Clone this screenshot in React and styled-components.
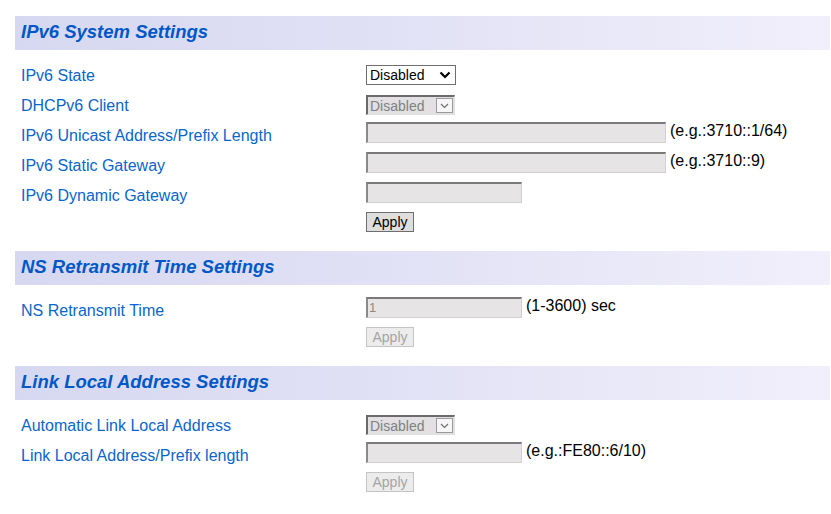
import React from 'react';
import styled, { createGlobalStyle, css } from 'styled-components';

const GlobalStyle = createGlobalStyle`
  html, body {
    margin: 0;
    padding: 0;
    background: #ffffff;
  }
  body {
    font-family: "Liberation Sans", Arial, sans-serif;
  }
`;

const Page = styled.div`
  padding: 16px 1px 0 15px;
`;

const Section = styled.section`
  margin-bottom: 11px;
`;

const SectionHeader = styled.h2`
  display: flex;
  align-items: center;
  height: 34px;
  margin: 0 0 10px 0;
  padding: 0 0 3px 6px;
  box-sizing: border-box;
  background: linear-gradient(90deg, #d6d8f1 0%, #e1e1f5 45%, #f1effb 100%);
  color: #0058c8;
  font-size: 18.5px;
  font-weight: bold;
  font-style: italic;
`;

const Row = styled.div`
  display: grid;
  grid-template-columns: 345px auto;
  height: 30px;
  padding-left: 6px;
`;

const Label = styled.div`
  align-self: center;
  padding-top: 2px;
  color: #0a66cc;
  font-size: 16px;
`;

const Control = styled.div`
  display: flex;
  align-items: center;
  ${props => props.centered ? css`
    align-self: center;
  ` : css`
    align-self: start;
    margin-top: 2px;
    height: 21px;
  `}
`;

const TextInput = styled.div`
  width: ${props => props.wide ? '300px' : '156px'};
  height: 21px;
  box-sizing: border-box;
  border-style: solid;
  border-width: 2px 1px 1px 2px;
  border-color: #7a7a7a #d0d0d0 #d0d0d0 #8a8a8a;
  background: #e7e4e6;
  color: #8a8a8a;
  font-size: 13px;
  line-height: 17px;
  padding-left: 1px;
`;

const Hint = styled.span`
  margin-left: 4px;
  color: #000000;
  font-size: 16px;
  margin-top: -3px;
`;

const SelectBox = styled.div`
  display: flex;
  align-items: center;
  justify-content: space-between;
  height: 20px;
  box-sizing: border-box;
  font-size: 14px;
  ${props => props.disabled ? css`
    width: 89px;
    border-style: solid;
    border-width: 2px 1px 1px 2px;
    border-color: #6a6a6a #e0e0e0 #e0e0e0 #6a6a6a;
    background: #e2e0e2;
    color: #808080;
    padding: 0 1px 0 2px;
  ` : css`
    width: 90px;
    border: 1px solid #6e6e6e;
    background: #ffffff;
    color: #000000;
    padding: 0 3px 0 3px;
  `}
`;

const ArrowButton = styled.span`
  display: flex;
  align-items: center;
  justify-content: center;
  ${props => props.disabled ? css`
    width: 17px;
    height: 15px;
    box-sizing: border-box;
    border: 1px solid #9a9a9a;
    background: #f6f6f6;
  ` : css`
    width: 14px;
    height: 14px;
  `}
`;

const Button = styled.button`
  align-self: flex-start;
  width: 48px;
  height: 20px;
  padding: 0;
  box-sizing: border-box;
  font-family: "Liberation Sans", Arial, sans-serif;
  font-size: 14px;
  border: 1px solid ${props => props.disabled ? '#c4c4c4' : '#6e6e6e'};
  background: ${props => props.disabled ? '#ececec' : '#dedede'};
  color: ${props => props.disabled ? '#a4a4a4' : '#000000'};
`;

const Chevron = ({ disabled }) => (
  disabled ? (
    <svg width="9" height="6" viewBox="0 0 9 6">
      <polyline points="1,1 4.5,4.5 8,1" fill="none" stroke="#707070" strokeWidth="1.2" />
    </svg>
  ) : (
    <svg width="12" height="8" viewBox="0 0 12 8">
      <polyline points="1.5,1.5 6,6 10.5,1.5" fill="none" stroke="#000000" strokeWidth="2.2" />
    </svg>
  )
);

const Select = ({ value, disabled }) => (
  <SelectBox disabled={disabled}>
    <span>{value}</span>
    <ArrowButton disabled={disabled}>
      <Chevron disabled={disabled} />
    </ArrowButton>
  </SelectBox>
);

const FieldRow = ({ label, children, centered }) => (
  <Row>
    <Label>{label}</Label>
    <Control centered={centered}>{children}</Control>
  </Row>
);

export default function App() {
  return (
    <Page>
      <GlobalStyle />

      <Section>
        <SectionHeader>IPv6 System Settings</SectionHeader>
        <FieldRow label="IPv6 State" centered>
          <Select value="Disabled" />
        </FieldRow>
        <FieldRow label="DHCPv6 Client" centered>
          <Select value="Disabled" disabled />
        </FieldRow>
        <FieldRow label="IPv6 Unicast Address/Prefix Length">
          <TextInput wide />
          <Hint>(e.g.:3710::1/64)</Hint>
        </FieldRow>
        <FieldRow label="IPv6 Static Gateway">
          <TextInput wide />
          <Hint>(e.g.:3710::9)</Hint>
        </FieldRow>
        <FieldRow label="IPv6 Dynamic Gateway">
          <TextInput />
        </FieldRow>
        <FieldRow label="">
          <Button>Apply</Button>
        </FieldRow>
      </Section>

      <Section>
        <SectionHeader>NS Retransmit Time Settings</SectionHeader>
        <FieldRow label="NS Retransmit Time">
          <TextInput>1</TextInput>
          <Hint>(1-3600) sec</Hint>
        </FieldRow>
        <FieldRow label="">
          <Button disabled>Apply</Button>
        </FieldRow>
      </Section>

      <Section>
        <SectionHeader>Link Local Address Settings</SectionHeader>
        <FieldRow label="Automatic Link Local Address" centered>
          <Select value="Disabled" disabled />
        </FieldRow>
        <FieldRow label="Link Local Address/Prefix length">
          <TextInput />
          <Hint>(e.g.:FE80::6/10)</Hint>
        </FieldRow>
        <FieldRow label="">
          <Button disabled>Apply</Button>
        </FieldRow>
      </Section>
    </Page>
  );
}
